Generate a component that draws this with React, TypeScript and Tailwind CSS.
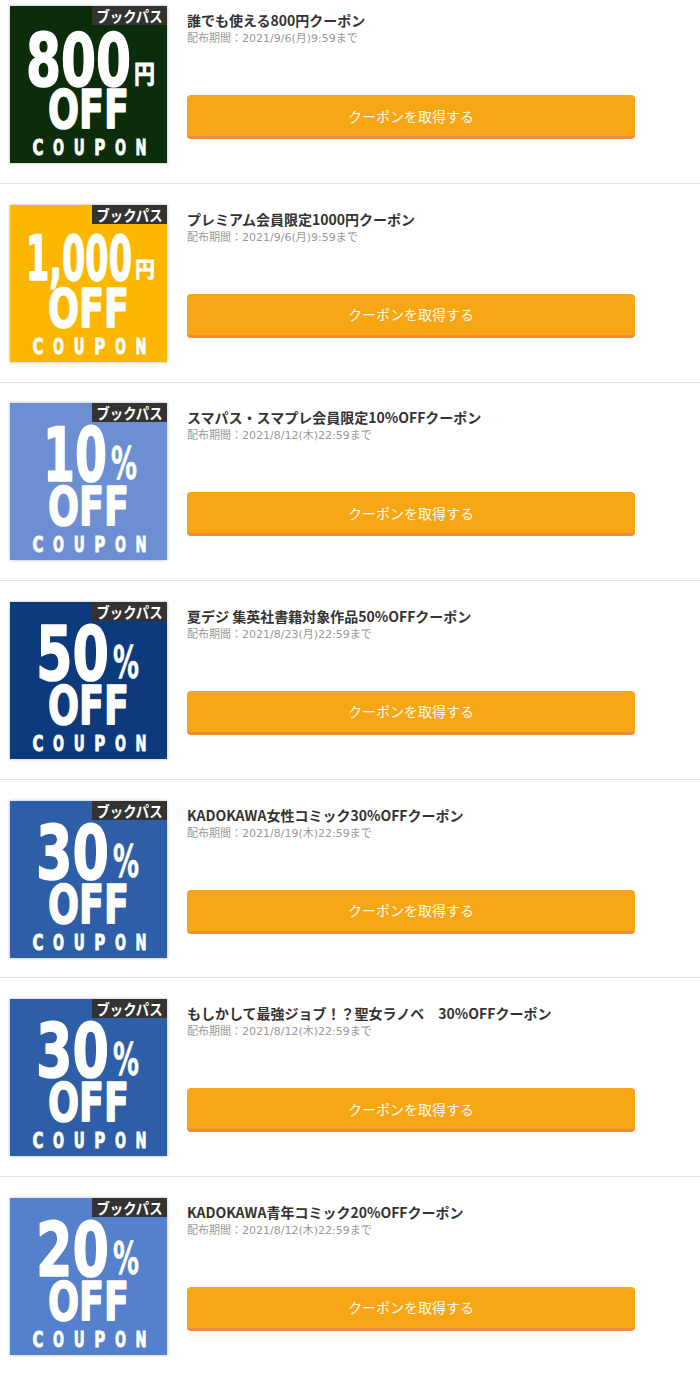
import React from "react";

type Coupon = {
  bg: string;
  kind: "yen" | "yen1000" | "pct" | "pct10";
  num: string;
  title: string;
  date: string;
};

const coupons: Coupon[] = [
  { bg: "#0b2d0b", kind: "yen", num: "800", title: "誰でも使える800円クーポン", date: "2021/9/6(月)9:59" },
  { bg: "#fbb600", kind: "yen1000", num: "1,000", title: "プレミアム会員限定1000円クーポン", date: "2021/9/6(月)9:59" },
  { bg: "#6c8fd4", kind: "pct10", num: "10", title: "スマパス・スマプレ会員限定10%OFFクーポン", date: "2021/8/12(木)22:59" },
  { bg: "#0c3a7c", kind: "pct", num: "50", title: "夏デジ 集英社書籍対象作品50%OFFクーポン", date: "2021/8/23(月)22:59" },
  { bg: "#2f5ea8", kind: "pct", num: "30", title: "KADOKAWA女性コミック30%OFFクーポン", date: "2021/8/19(木)22:59" },
  { bg: "#2f5ea8", kind: "pct", num: "30", title: "もしかして最強ジョブ！？聖女ラノベ　30%OFFクーポン", date: "2021/8/12(木)22:59" },
  { bg: "#5580cb", kind: "pct", num: "20", title: "KADOKAWA青年コミック20%OFFクーポン", date: "2021/8/12(木)22:59" },
];

const NUMFONT = "'DejaVu Sans', 'Liberation Sans', sans-serif";
const JPFONT = "'Noto Sans CJK JP', sans-serif";
const DATEFONT = "'DejaVu Sans', 'Noto Sans CJK JP', sans-serif";

function CouponImage({ c }: { c: Coupon }) {
  const letters = ["C", "O", "U", "P", "O", "N"];
  const centers = [28, 48.6, 69.2, 89.8, 110.4, 131];
  const heavy = { stroke: "#fff", strokeWidth: 1.6, strokeLinejoin: "round" as const };
  let main: React.ReactNode = null;
  if (c.kind === "yen") {
    main = (
      <>
        <text x={16} y={80} fontSize={73} fontWeight="bold" fontFamily={NUMFONT} fill="#fff" textLength={105} lengthAdjust="spacingAndGlyphs" {...heavy}>
          {c.num}
        </text>
        <text x={124} y={77} fontSize={25} fontWeight="bold" fontFamily={JPFONT} fill="#fff" textLength={21} lengthAdjust="spacingAndGlyphs" stroke="#fff" strokeWidth={0.8}>
          円
        </text>
      </>
    );
  } else if (c.kind === "yen1000") {
    main = (
      <>
        <text x={16} y={75} fontSize={62} fontWeight="bold" fontFamily={NUMFONT} fill="#fff" textLength={106} lengthAdjust="spacingAndGlyphs" {...heavy}>
          {c.num}
        </text>
        <text x={125} y={72} fontSize={22} fontWeight="bold" fontFamily={JPFONT} fill="#fff" textLength={20} lengthAdjust="spacingAndGlyphs" stroke="#fff" strokeWidth={0.8}>
          円
        </text>
      </>
    );
  } else {
    const isTen = c.kind === "pct10";
    const nx = isTen ? 33 : 26;
    const nw = isTen ? 64 : 73;
    const px = isTen ? 101 : 103;
    main = (
      <>
        <text x={nx} y={78} fontSize={75} fontWeight="bold" fontFamily={NUMFONT} fill="#fff" textLength={nw} lengthAdjust="spacingAndGlyphs" {...heavy}>
          {c.num}
        </text>
        <text x={px} y={76} fontSize={45} fontWeight="bold" fontFamily={NUMFONT} fill="#fff" textLength={26} lengthAdjust="spacingAndGlyphs" stroke="#fff" strokeWidth={0.6}>
          %
        </text>
      </>
    );
  }
  return (
    <div className="w-[157px] h-[157px] shrink-0 shadow-[0_0_3px_rgba(0,0,0,0.3)]">
      <svg width="157" height="157" viewBox="0 0 157 157" className="block">
        <rect x="0" y="0" width="157" height="157" fill={c.bg} />
        <rect x="82" y="0" width="75" height="19" fill="#333333" />
        <text x={119.5} y={15.5} fontSize={15} fontWeight="bold" fontFamily={JPFONT} fill="#fff" textAnchor="middle" textLength={66} lengthAdjust="spacingAndGlyphs">
          ブックパス
        </text>
        {main}
        <text x={38} y={122} fontSize={54} fontWeight="bold" fontFamily={NUMFONT} fill="#fff" textLength={81} lengthAdjust="spacingAndGlyphs" {...heavy}>
          OFF
        </text>
        {letters.map((l, i) => (
          <text key={i} x={centers[i]} y={149} fontSize={22} fontWeight="bold" fontFamily={NUMFONT} fill="#fff" textAnchor="middle" textLength={11} lengthAdjust="spacingAndGlyphs" stroke="#fff" strokeWidth={0.9}>
            {l}
          </text>
        ))}
      </svg>
    </div>
  );
}

export default function App() {
  return (
    <div className="w-[700px] bg-white overflow-hidden" style={{ fontFamily: JPFONT }}>
      <div className="mt-[-14.6px]">
        {coupons.map((c, i) => (
          <div key={i} className="h-[198.6px] border-b border-[#e3e3e3] flex pt-[20.8px] pl-[10px]">
            <CouponImage c={c} />
            <div className="ml-[20px] flex flex-col pt-[4px]">
              <div className="text-[14px] leading-[20px] font-bold text-[#333333] whitespace-nowrap">{c.title}</div>
              <div className="mt-[1px] text-[11px] leading-[16px] text-[#999999] whitespace-nowrap" style={{ fontFamily: DATEFONT }}>
                配布期間：{c.date}まで
              </div>
              <button className="mt-[48px] w-[448px] h-[44px] rounded-[4px] bg-[#f7a616] border-b-[3px] border-[#f28a3a] text-[#fff8ea] text-[14px] leading-[20px] flex items-center justify-center">
                クーポンを取得する
              </button>
            </div>
          </div>
        ))}
      </div>
    </div>
  );
}
